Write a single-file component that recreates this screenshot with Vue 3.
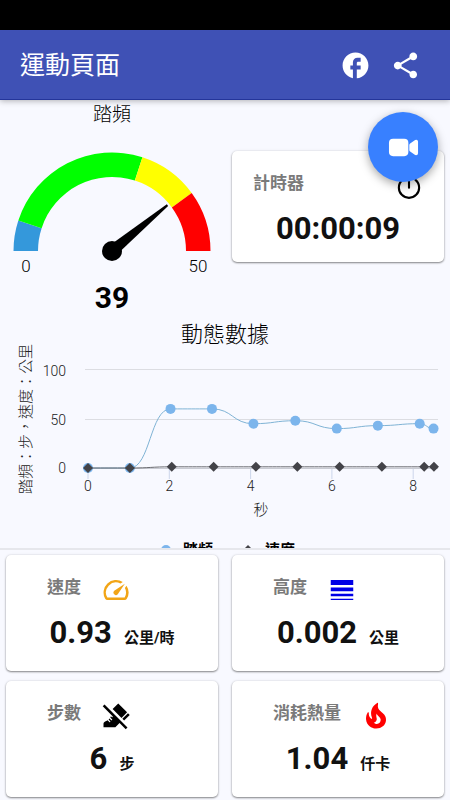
<script setup>
const segments = [
  { from: 0, to: 5, color: '#3498db' },
  { from: 5, to: 30, color: '#00ff00' },
  { from: 30, to: 40, color: '#ffff00' },
  { from: 40, to: 50, color: '#ff0000' },
]
const cadence = 39
const gaugeMax = 50
const center = { x: 106, y: 123 }

function polar(value, radius) {
  const angle = Math.PI * (1 - value / gaugeMax)
  return `${center.x + radius * Math.cos(angle)} ${center.y - radius * Math.sin(angle)}`
}
function arc(segment) {
  return `M${polar(segment.from, 98.5)} A98.5 98.5 0 0 1 ${polar(segment.to, 98.5)} ` +
    `L${polar(segment.to, 74)} A74 74 0 0 0 ${polar(segment.from, 74)}Z`
}
const needleAngle = (cadence / gaugeMax) * 180

const px = (t) => 88 + t * 40.65
const py = (v) => 150 - v * 0.985

const cadenceSeries = [
  [0, 0], [1.03, 0], [2.03, 60], [3.05, 60], [4.07, 45],
  [5.1, 48], [6.12, 40], [7.13, 43], [8.16, 45], [8.5, 40],
].map(([t, v]) => ({ x: px(t), y: py(v) }))

const speedSeries = [
  [0, 0], [1.03, 0], [2.06, 1.2], [3.09, 1.2], [4.13, 1.2],
  [5.15, 1.2], [6.19, 1.2], [7.23, 1.2], [8.27, 1.2], [8.51, 1.2],
].map(([t, v]) => ({ x: px(t), y: py(v) }))

function smooth(points) {
  return points.map((p, i) => {
    if (i === 0) return `M${p.x} ${p.y}`
    const prev = points[i - 1]
    const half = (p.x - prev.x) / 2
    return `C${prev.x + half} ${prev.y} ${p.x - half} ${p.y} ${p.x} ${p.y}`
  }).join(' ')
}
const diamond = (x, y) => `M${x} ${y - 5}L${x + 5} ${y}L${x} ${y + 5}L${x - 5} ${y}Z`

const stats = [
  {
    label: '速度', value: '0.93', unit: '公里/時', tone: 'orange',
    icon: 'M20.38 8.57l-1.23 1.85a8 8 0 0 1-.22 7.58H5.07A8 8 0 0 1 15.58 6.85l1.85-1.23A10 10 0 0 0 3.35 19a2 2 0 0 0 1.72 1h13.85a2 2 0 0 0 1.74-1 10 10 0 0 0-.27-10.44zm-9.79 6.84a2 2 0 0 0 2.83 0l5.66-8.49-8.49 5.66a2 2 0 0 0 0 2.83z',
  },
  {
    label: '高度', value: '0.002', unit: '公里', tone: 'blue',
    icon: 'M3 17h18v-2H3v2zm0 3h18v-1H3v1zm0-7h18v-3H3v3zm0-9v4h18V4H3z',
  },
  {
    label: '步數', value: '6', unit: '步', tone: 'black',
    icon: 'M1.39 4.22l7.9 7.9c.18.2.18.5-.01.7-.1.1-.23.15-.35.15s-.26-.05-.35-.15l-.71-.71c-.11.4-.26.78-.45 1.12l1.4 1.4c.2.2.2.51 0 .71-.1.1-.23.15-.35.15s-.26-.05-.35-.15l-1.27-1.27c-.24.29-.5.56-.77.8l1.28 1.28c.2.2.2.51 0 .71-.1.09-.23.14-.36.14s-.26-.05-.35-.15l-1.38-1.38c-.69.46-1.39.79-1.97 1.02C2.52 16.79 2 17.54 2 18.37V21h9.5l3.33-3.33 4.95 4.95 1.41-1.41L2.81 2.81 1.39 4.22zM18.51 15.68l-1.41-1.41 4.48-4.48L23 11.2l-4.49 4.48zM20.88 9.08l-4.48 4.48L9.3 6.47 13.8 2l7.08 7.08z',
  },
  {
    label: '消耗熱量', value: '1.04', unit: '仟卡', tone: 'red',
    icon: 'M19.48 12.35c-1.57-4.08-7.16-4.3-5.81-10.23.1-.44-.37-.78-.75-.55C9.29 3.71 6.68 8 8.87 13.62c.18.46-.36.89-.75.59-1.81-1.37-2-3.34-1.84-4.75.06-.52-.62-.77-.91-.34C4.69 10.16 4 11.84 4 14.37c.38 5.6 5.11 7.32 6.81 7.54 2.43.31 5.06-.14 6.95-1.87 2.08-1.93 2.84-5.01 1.72-7.69zm-9.28 5.03c1.44-.35 2.18-1.39 2.38-2.31.33-1.43-.96-2.83-.09-5.09.33 1.87 3.27 3.04 3.27 5.08.08 2.53-2.66 4.7-5.56 2.32z',
  },
]
</script>

<template>
  <div class="page">
    <div class="status-bar"></div>
    <header class="toolbar">
      <h1>運動頁面</h1>
      <button type="button" class="tool" aria-label="Facebook">
        <svg viewBox="0 0 24 24"><path d="M22 12c0-5.52-4.48-10-10-10S2 6.48 2 12c0 4.84 3.44 8.87 8 9.8V15H8v-3h2V9.5C10 7.57 11.57 6 13.5 6H16v3h-2c-.55 0-1 .45-1 1v2h3v3h-3v6.95c5.05-.5 9-4.76 9-9.95z" /></svg>
      </button>
      <button type="button" class="tool" aria-label="分享">
        <svg viewBox="0 0 24 24"><path d="M18 16.08c-.76 0-1.44.3-1.96.77L8.91 12.7c.05-.23.09-.46.09-.7s-.04-.47-.09-.7l7.05-4.11c.54.5 1.25.81 2.04.81 1.66 0 3-1.34 3-3s-1.34-3-3-3-3 1.34-3 3c0 .24.04.47.09.7L8.04 9.81C7.5 9.31 6.79 9 6 9c-1.66 0-3 1.34-3 3s1.34 3 3 3c.79 0 1.5-.31 2.04-.81l7.12 4.16c-.05.21-.08.43-.08.65 0 1.61 1.31 2.92 2.92 2.92s2.92-1.31 2.92-2.92-1.31-2.92-2.92-2.92z" /></svg>
      </button>
    </header>

    <main>
      <button type="button" class="fab" aria-label="錄影">
        <svg viewBox="0 0 512 512"><path d="M464 384.39a32 32 0 01-13-2.77 15.77 15.77 0 01-2.71-1.54l-82.71-58.22A32 32 0 01352 295.7v-79.4a32 32 0 0113.58-26.16l82.71-58.22a15.77 15.77 0 012.71-1.54 32 32 0 0145 29.24v192a32 32 0 01-32 32zM268 400H84a68.07 68.07 0 01-68-68V180a68.07 68.07 0 0168-68h184.48A67.6 67.6 0 01336 179.52V332a68.07 68.07 0 01-68 68z" /></svg>
      </button>

      <section class="overview">
        <div class="gauge">
          <h2>踏頻</h2>
          <svg viewBox="0 0 212 188">
            <path v-for="s in segments" :key="s.from" :d="arc(s)" :fill="s.color" />
            <g :transform="`rotate(${needleAngle} ${center.x} ${center.y})`">
              <path d="M34 122L106 117V129L34 124Z" />
            </g>
            <circle :cx="center.x" :cy="center.y" r="10" />
            <text class="bound" x="20" y="144">0</text>
            <text class="bound" x="192" y="144">50</text>
            <text class="reading" x="106" y="180">{{ cadence }}</text>
          </svg>
        </div>
        <article class="card timer">
          <div class="card-head">
            <h3>計時器</h3>
            <svg class="power" viewBox="-28 -60 568 568"><path d="M378 108a191.41 191.41 0 0170 148c0 106-86 192-192 192S64 362 64 256a192 192 0 0169-148M256 64v192" /></svg>
          </div>
          <p class="figure"><strong>00:00:09</strong></p>
        </article>
      </section>

      <section class="chart">
        <svg viewBox="0 0 450 230">
          <text class="chart-title" x="225" y="24">動態數據</text>
          <g class="grid">
            <path d="M85 51.5H438M85 101.5H438" />
          </g>
          <path class="axis" d="M85 150.5H438" />
          <path v-for="t in [0, 2, 4, 6, 8]" :key="t" class="tick" :d="`M${px(t)} 151v10`" />
          <g class="axis-label y-label">
            <text x="66" y="58">100</text>
            <text x="66" y="107">50</text>
            <text x="66" y="155">0</text>
          </g>
          <g class="axis-label x-label">
            <text v-for="t in [0, 2, 4, 6, 8]" :key="t" :x="px(t)" y="173">{{ t }}</text>
          </g>
          <text class="axis-title" x="261" y="197">秒</text>
          <text class="axis-title" transform="translate(31 101) rotate(-90)">踏頻：步，速度：公里</text>
          <path class="cadence-line" :d="smooth(cadenceSeries)" />
          <circle v-for="p in cadenceSeries" :key="p.x" class="cadence-dot" :cx="p.x" :cy="p.y" r="5" />
          <path class="speed-line" :d="smooth(speedSeries)" />
          <path v-for="p in speedSeries" :key="p.x" class="speed-dot" :d="diamond(p.x, p.y)" />
          <circle class="cadence-dot" cx="166" cy="232" r="5" />
          <text class="legend" x="183" y="237">踏頻</text>
          <path class="speed-dot" :d="diamond(248, 232)" />
          <text class="legend" x="265" y="237">速度</text>
        </svg>
      </section>

      <section class="stats">
        <article v-for="s in stats" :key="s.label" class="card stat">
          <div class="card-head">
            <h3>{{ s.label }}</h3>
            <svg :class="s.tone" viewBox="0 0 24 24"><path :d="s.icon" /></svg>
          </div>
          <p class="figure"><strong>{{ s.value }}</strong><span>{{ s.unit }}</span></p>
        </article>
      </section>
    </main>
  </div>
</template>

<style>
body {
  margin: 0;
  background: #f8f9ff;
}
</style>

<style scoped>
.page {
  min-height: 100vh;
  background: #f8f9ff;
  color: #000;
  font-family: Roboto, "Noto Sans CJK TC", sans-serif;
}
h1, h2, h3, p {
  margin: 0;
}
button {
  border: 0;
  padding: 0;
  cursor: pointer;
}
svg {
  display: block;
}
.status-bar {
  height: 30px;
  background: #000;
}
.toolbar {
  position: relative;
  display: flex;
  align-items: center;
  box-sizing: border-box;
  height: 70px;
  padding: 2px 20px 0;
  background: #3f51b5;
  border-bottom: 1px solid #24359a;
  box-shadow: 0 1px 6px rgba(0, 0, 0, 0.3);
  color: #fff;
}
h1 {
  flex: 1;
  font-size: 25px;
  line-height: 36px;
  font-weight: 400;
}
.tool {
  display: grid;
  place-items: center;
  width: 50px;
  height: 50px;
  background: none;
}
.tool svg {
  width: 31px;
  height: 31px;
  fill: #fff;
}
main {
  position: relative;
}
.fab {
  position: absolute;
  top: 12px;
  right: 12px;
  display: grid;
  place-items: center;
  width: 70px;
  height: 70px;
  border-radius: 50%;
  background: #3880ff;
  box-shadow: 0 3px 10px rgba(0, 0, 0, 0.35);
}
.fab svg {
  width: 31px;
  height: 31px;
  fill: #fff;
}
.overview, .stats {
  display: grid;
  grid-template-columns: 1fr 1fr;
  gap: 10px 14px;
  padding: 0 6px;
}
.overview {
  align-items: center;
}
h2 {
  padding-top: 2px;
  font-size: 19px;
  line-height: 26px;
  font-weight: 300;
  text-align: center;
}
.gauge {
  padding-bottom: 2px;
}
.gauge svg {
  width: 100%;
}
.gauge text {
  text-anchor: middle;
}
.bound {
  font-size: 17px;
  font-weight: 300;
}
.reading {
  font-size: 30px;
  font-weight: 700;
}
.card {
  background: #fff;
  border-radius: 5px;
  box-shadow: 0 1px 2px rgba(0, 0, 0, 0.45), 0 0 3px rgba(0, 0, 0, 0.1);
}
.card-head {
  display: flex;
  gap: 20px;
}
.card-head svg {
  width: 30px;
  height: 30px;
}
h3 {
  font-size: 17px;
  line-height: 24px;
  font-weight: 700;
  color: #7a7a7a;
}
.stat {
  padding: 20px 0 19px;
}
.stat .card-head {
  padding-left: 41px;
}
.timer {
  margin-bottom: 5px;
  padding: 20px 0 14px;
}
.timer .card-head {
  justify-content: space-between;
  padding: 0 20px 0 21px;
}
.figure {
  display: flex;
  align-items: baseline;
  justify-content: center;
  gap: 12px;
  margin-top: 9px;
  line-height: 38px;
  color: #111;
}
.figure strong {
  font-size: 31px;
  font-weight: 700;
}
.figure span {
  font-size: 15px;
  line-height: 20px;
  font-weight: 700;
}
.power {
  fill: none;
  stroke: #000;
  stroke-width: 40;
  stroke-linecap: round;
}
.orange {
  fill: #f2a516;
}
.blue {
  fill: #0000e6;
}
.black {
  fill: #000;
}
.red {
  fill: #f00;
}
.chart {
  overflow: hidden;
}
.chart svg {
  width: 100%;
}
.chart-title {
  font-size: 22px;
  font-weight: 300;
  text-anchor: middle;
}
.grid path {
  stroke: #dcdde2;
}
.axis {
  stroke: #c8cad2;
}
.tick {
  stroke: #ccd6eb;
}
.axis-label {
  font-size: 14px;
  font-weight: 300;
  fill: #222;
}
.y-label {
  text-anchor: end;
}
.x-label {
  text-anchor: middle;
}
.axis-title {
  font-size: 15px;
  font-weight: 300;
  fill: #222;
  text-anchor: middle;
}
.cadence-line {
  fill: none;
  stroke: #7fb3d5;
}
.cadence-dot {
  fill: #7cb5ec;
}
.speed-line {
  fill: none;
  stroke: #6a6b70;
}
.speed-dot {
  fill: #434348;
}
.legend {
  font-size: 15px;
  font-weight: 700;
}
.stats {
  padding-top: 5px;
  padding-bottom: 3px;
  border-top: 2px solid #e6e7ec;
}
</style>
